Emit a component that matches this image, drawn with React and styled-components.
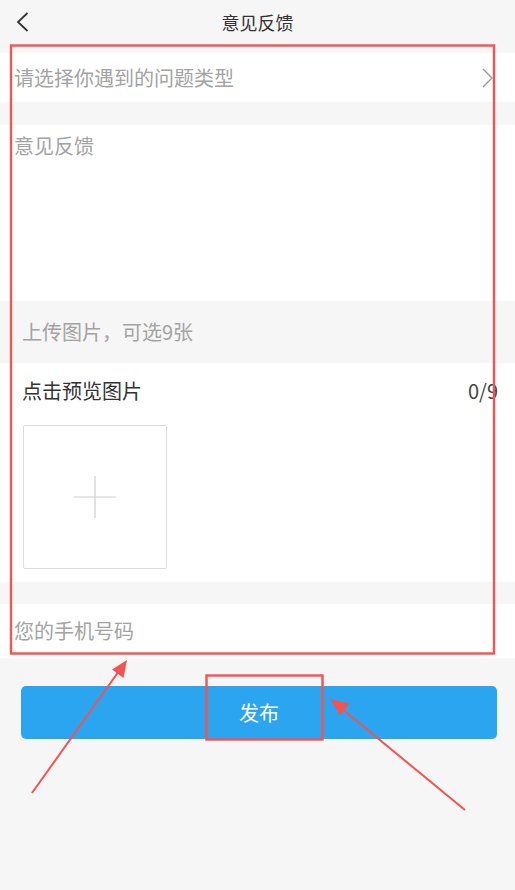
import React from "react";
import styled, { createGlobalStyle } from "styled-components";

const Global = createGlobalStyle`
  html, body { margin: 0; padding: 0; background: #f6f6f6; }
  body { font-family: "Noto Sans CJK SC", "Noto Sans", sans-serif; }
  * { box-sizing: border-box; }
`;

const Page = styled.div`
  position: relative;
  width: 515px;
  height: 890px;
  background: #f6f6f6;
  overflow: hidden;
`;

const Header = styled.div`
  display: grid;
  grid-template-columns: 44px 1fr 44px;
  align-items: center;
  height: 44px;
`;

const BackBtn = styled.div`
  display: flex;
  align-items: center;
  padding-left: 16px;
  height: 44px;
`;

const Title = styled.div`
  text-align: center;
  font-size: 18px;
  color: #333;
`;

const Form = styled.div`
  display: flex;
  flex-direction: column;
  margin-top: 9px;
`;

const SelectRow = styled.div`
  display: flex;
  align-items: center;
  justify-content: space-between;
  height: 49px;
  background: #fff;
  padding: 0 22px 0 14px;
`;

const Placeholder = styled.span`
  font-size: 20px;
  color: #a3a3a3;
`;

const TextArea = styled.textarea`
  display: block;
  margin-top: 23px;
  height: 176px;
  border: none;
  outline: none;
  resize: none;
  background: #fff;
  padding: 6px 14px;
  font-family: inherit;
  font-size: 20px;
  color: #333;
  &::placeholder { color: #a3a3a3; }
`;

const UploadHeader = styled.div`
  display: flex;
  align-items: center;
  height: 62px;
  padding: 0 0 2px 22px;
  font-size: 20px;
  color: #a3a3a3;
`;

const UploadBody = styled.div`
  background: #fff;
  padding: 0 17px 13px 22px;
`;

const UploadTitleRow = styled.div`
  display: flex;
  align-items: center;
  justify-content: space-between;
  height: 62px;
  padding-bottom: 8px;
  font-size: 20px;
  color: #333;
`;

const Count = styled.span`
  font-size: 20px;
  color: #444;
`;

const AddBox = styled.div`
  display: flex;
  align-items: center;
  justify-content: center;
  width: 144px;
  height: 144px;
  margin-left: 1px;
  border: 1px solid #dcdcdc;
  border-radius: 2px;
`;

const Input = styled.input`
  display: block;
  margin-top: 22px;
  height: 54px;
  border: none;
  outline: none;
  background: #fff;
  padding: 0 14px 2px;
  font-family: inherit;
  font-size: 20px;
  color: #333;
  &::placeholder { color: #a3a3a3; }
`;

const SubmitButton = styled.button`
  display: flex;
  align-items: center;
  justify-content: center;
  margin: 28px 18px 0 21px;
  width: calc(100% - 39px);
  height: 53px;
  border: none;
  border-radius: 5px;
  background: #2ca5f0;
  color: #fff;
  font-family: inherit;
  font-size: 20px;
`;

const Annotations = styled.svg`
  position: absolute;
  left: 0;
  top: 0;
  width: 515px;
  height: 890px;
  pointer-events: none;
`;

export default function App() {
  const red = "#f25353";
  return (
    <Page>
      <Global />
      <Header>
        <BackBtn>
          <svg width="14" height="22" viewBox="0 0 14 22">
            <path d="M11.5 2 L2 11 L11.5 20" fill="none" stroke="#333" strokeWidth="1.8" />
          </svg>
        </BackBtn>
        <Title>意见反馈</Title>
        <div />
      </Header>
      <Form>
        <SelectRow>
          <Placeholder>请选择你遇到的问题类型</Placeholder>
          <svg width="11" height="20" viewBox="0 0 11 20">
            <path d="M1 1 L10 10 L1 19" fill="none" stroke="#999" strokeWidth="1.4" />
          </svg>
        </SelectRow>
        <TextArea placeholder="意见反馈" />
        <UploadHeader>上传图片，可选9张</UploadHeader>
        <UploadBody>
          <UploadTitleRow>
            <span>点击预览图片</span>
            <Count>0/9</Count>
          </UploadTitleRow>
          <AddBox>
            <svg width="42" height="42" viewBox="0 0 42 42">
              <path d="M0 21 H42 M21 0 V42" stroke="#cfcfcf" strokeWidth="1.2" />
            </svg>
          </AddBox>
        </UploadBody>
        <Input placeholder="您的手机号码" />
      </Form>
      <SubmitButton>发布</SubmitButton>
      <Annotations viewBox="0 0 515 890">
        <rect x="11" y="45.5" width="483" height="608" fill="none" stroke={red} strokeWidth="2.4" />
        <rect x="206.5" y="675.5" width="116" height="64" fill="none" stroke={red} strokeWidth="2.4" />
        <line x1="32" y1="793" x2="119" y2="671" stroke={red} strokeWidth="2" />
        <polygon points="127,660 123.5,678 112,669.5" fill={red} />
        <line x1="465" y1="810" x2="341" y2="708" stroke={red} strokeWidth="2" />
        <polygon points="330,699 349.5,703.5 340,715" fill={red} />
      </Annotations>
    </Page>
  );
}
